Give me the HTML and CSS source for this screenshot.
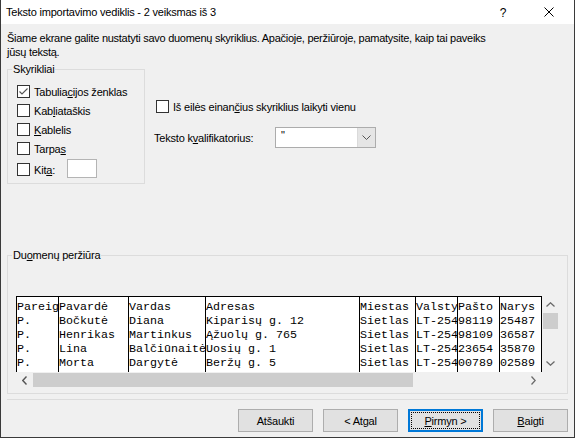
FILE: index.html
```html
<!DOCTYPE html>
<html lang="lt">
<head>
<meta charset="utf-8">
<title>Teksto importavimo vediklis</title>
<link rel="stylesheet" href="styles.css">
</head>
<body>
<div class="window">
  <div class="titlebar">
    <span class="title">Teksto importavimo vediklis - 2 veiksmas iš 3</span>
    <span class="tb-btn tb-help">?</span>
    <span class="tb-btn tb-close">
      <svg width="10" height="10" viewBox="0 0 10 10"><path d="M0.5 0.5 L9.5 9.5 M9.5 0.5 L0.5 9.5" stroke="#000" stroke-width="1" fill="none"/></svg>
    </span>
  </div>
  <div class="content">
    <p class="intro">Šiame ekrane galite nustatyti savo duomenų skyriklius. Apačioje, peržiūroje, pamatysite, kaip tai paveiks<br>jūsų tekstą.</p>
    <div class="top-row">
      <fieldset class="group group-sep">
        <legend>Skyrikliai</legend>
        <div class="group-body sep-body">
          <div class="cb-row">
            <span class="cb"><svg width="11" height="11" viewBox="0 0 11 11"><path d="M1.5 5.5 L4 8 L9.5 2.5" stroke="#555" stroke-width="1.1" fill="none"/></svg></span>
            <span>Tabulia<u>c</u>ijos ženklas</span>
          </div>
          <div class="cb-row"><span class="cb"></span><span>Kab<u>l</u>iataškis</span></div>
          <div class="cb-row"><span class="cb"></span><span><u>K</u>ablelis</span></div>
          <div class="cb-row"><span class="cb"></span><span>Tarpa<u>s</u></span></div>
          <div class="cb-row kita-row"><span class="cb"></span><span class="kita-label">Kit<u>a</u>:</span><span class="textbox"></span></div>
        </div>
      </fieldset>
      <div class="options">
        <div class="cb-row consec"><span class="cb"></span><span>Iš eilės einan<u>č</u>ius skyriklius laikyti vienu</span></div>
        <div class="qual-row">
          <span class="qual-label">Teksto k<u>v</u>alifikatorius:</span>
          <span class="combo">
            <span class="combo-value">"</span>
            <span class="combo-btn"><svg width="9" height="5" viewBox="0 0 9 5"><path d="M0.5 0.5 L4.5 4.5 L8.5 0.5" stroke="#555" stroke-width="1" fill="none"/></svg></span>
          </span>
        </div>
      </div>
    </div>
    <fieldset class="group group-preview">
      <legend>Du<u>o</u>menų peržiūra</legend>
      <div class="group-body preview-body">
        <div class="preview">
          <div class="table">
            <div class="col c6">Pareig
P.
P.
P.
P.</div>
            <div class="col c10">Pavardė
Bočkutė
Henrikas
Lina
Morta</div>
            <div class="col c11">Vardas
Diana
Martinkus
Balčiūnaitė
Dargytė</div>
            <div class="col c22">Adresas
Kiparisų g. 12
Ąžuolų g. 765
Uosių g. 1
Beržų g. 5</div>
            <div class="col c8">Miestas
Sietlas
Sietlas
Sietlas
Sietlas</div>
            <div class="col c6">Valsty
LT-254
LT-254
LT-254
LT-254</div>
            <div class="col c6">Pašto
98119
98109
23654
00789</div>
            <div class="col c6 last">Narys
25487
36587
35870
02589</div>
          </div>
          <div class="vscroll">
            <span class="sb-btn"><svg width="9" height="5" viewBox="0 0 9 5"><path d="M0.5 4.5 L4.5 0.8 L8.5 4.5" stroke="#6a6a6a" stroke-width="1.3" fill="none"/></svg></span>
            <span class="vthumb"></span>
            <span class="sb-fill"></span>
            <span class="sb-btn"><svg width="9" height="5" viewBox="0 0 9 5"><path d="M0.5 0.5 L4.5 4.2 L8.5 0.5" stroke="#6a6a6a" stroke-width="1.3" fill="none"/></svg></span>
          </div>
          <div class="hscroll">
            <span class="sb-btn"><svg width="5" height="9" viewBox="0 0 5 9"><path d="M4.5 0.5 L0.8 4.5 L4.5 8.5" stroke="#555" stroke-width="1.4" fill="none"/></svg></span>
            <span class="hthumb"></span>
            <span class="sb-fill"></span>
            <span class="sb-btn"><svg width="5" height="9" viewBox="0 0 5 9"><path d="M0.5 0.5 L4.2 4.5 L0.5 8.5" stroke="#6a6a6a" stroke-width="1.3" fill="none"/></svg></span>
          </div>
          <div class="corner"></div>
        </div>
      </div>
    </fieldset>
    <div class="separator"></div>
    <div class="buttons">
      <span class="btn">Atšaukti</span>
      <span class="btn">&lt; At<u>g</u>al</span>
      <span class="btn btn-default"><span class="focus"><u>P</u>irmyn &gt;</span></span>
      <span class="btn"><u>B</u>aigti</span>
    </div>
  </div>
</div>
</body>
</html>
```
FILE: styles.css
```css
html, body {
  margin: 0;
  padding: 0;
  background: #1c1c1c;
}

.window {
  width: 575px;
  height: 438px;
  box-sizing: border-box;
  background: #f0f0f0;
  border-left: 1px solid #3a3a3a;
  border-right: 1px solid #3a3a3a;
  border-bottom: 1px solid #3a3a3a;
  display: flex;
  flex-direction: column;
  font-family: "Liberation Sans", Arial, sans-serif;
  font-size: 11px;
  letter-spacing: -0.2px;
  color: #000;
  overflow: hidden;
}

u {
  text-decoration: underline;
  text-underline-offset: 1px;
}

/* title bar */
.titlebar {
  height: 24px;
  flex: none;
  background: #fff;
  display: flex;
  align-items: center;
  padding-left: 5px;
  padding-right: 2px;
}
.title {
  flex: 1;
  font-size: 11px;
}
.tb-btn {
  width: 46px;
  height: 24px;
  display: flex;
  align-items: center;
  justify-content: center;
}
.tb-help {
  font-size: 12px;
  padding-top: 1px;
  box-sizing: border-box;
}

/* content */
.content {
  flex: 1;
  display: flex;
  flex-direction: column;
  padding: 7px 6px 0 6px;
}
.intro {
  margin: 0;
  line-height: 14px;
  letter-spacing: -0.27px;
}

.top-row {
  display: flex;
  align-items: flex-start;
  margin-top: 3px;
}

.group {
  margin: 0;
  padding: 0;
  border: 1px solid #dcdcdc;
  min-width: 0;
}
.group legend {
  margin-left: 4px;
  padding: 0 1px;
  line-height: 14px;
}

.group-sep {
  width: 138px;
  box-sizing: border-box;
}
.sep-body {
  padding: 6px 0 3px 9px;
}

.cb-row {
  display: flex;
  align-items: center;
  height: 19px;
  white-space: nowrap;
}
.cb {
  width: 13px;
  height: 13px;
  box-sizing: border-box;
  border: 1px solid #333;
  background: #fff;
  margin-right: 4px;
  flex: none;
  display: flex;
  align-items: center;
  justify-content: center;
}
.kita-row {
  height: 21px;
  margin-top: 1px;
}
.kita-label {
  width: 33px;
}
.textbox {
  width: 30px;
  height: 19px;
  box-sizing: border-box;
  border: 1px solid #b4b4b4;
  background: #fff;
  margin-top: -2px;
}

.options {
  margin-left: 9px;
  padding-top: 35px;
}
.consec {
  margin-left: 2px;
}
.qual-row {
  display: flex;
  align-items: center;
  margin-top: 11px;
  height: 21px;
}
.qual-label {
  width: 121px;
}
.combo {
  width: 101px;
  height: 21px;
  box-sizing: border-box;
  border: 1px solid #acacac;
  background: #fff;
  display: flex;
}
.combo-value {
  flex: 1;
  padding-left: 5px;
  line-height: 14px;
}
.combo-btn {
  width: 17px;
  background: #e5e5e5;
  border-left: 1px solid #dadada;
  display: flex;
  align-items: center;
  justify-content: center;
}

/* preview */
.group-preview {
  width: 561px;
  box-sizing: border-box;
  margin-top: 64px;
}
.preview-body {
  padding: 34px 0 5px 8px;
}
.preview {
  display: grid;
  grid-template-columns: 526px 16px;
  grid-template-rows: 76px 16px;
}
.table {
  display: flex;
  background: #fff;
  border-top: 1px solid #000;
  overflow: hidden;
}
.col {
  box-sizing: border-box;
  border-left: 1px solid #000;
  padding-top: 3px;
  font-family: "Liberation Mono", "Courier New", monospace;
  font-size: 11.67px;
  letter-spacing: 0;
  line-height: 14px;
  white-space: pre;
  overflow: hidden;
  flex: none;
}
.col.last {
  border-right: 1px solid #000;
}
.c6 { width: 42px; }
.c8 { width: 56px; }
.c10 { width: 70px; }
.c11 { width: 77px; }
.c22 { width: 154px; }
.col.last.c6 { width: 43px; }

.vscroll {
  display: flex;
  flex-direction: column;
  background: #f0f0f0;
}
.vscroll .sb-btn {
  height: 17px;
  display: flex;
  align-items: center;
  justify-content: center;
}
.vthumb {
  height: 16px;
  margin-left: 1px;
  background: #cdcdcd;
}
.sb-fill {
  flex: 1;
}
.hscroll {
  display: flex;
  background: #f0f0f0;
}
.hscroll .sb-btn {
  width: 17px;
  display: flex;
  align-items: center;
  justify-content: center;
}
.hthumb {
  width: 380px;
  margin: 1px 0;
  background: #cdcdcd;
}
.corner {
  background: #f0f0f0;
}

.separator {
  margin-top: 5px;
  border-top: 1px solid #dcdcdc;
}

.buttons {
  display: flex;
  justify-content: flex-end;
  gap: 10px;
  margin-top: 9px;
}
.btn {
  width: 75px;
  height: 23px;
  box-sizing: border-box;
  border: 1px solid #adadad;
  background: #e1e1e1;
  display: flex;
  align-items: center;
  justify-content: center;
  white-space: nowrap;
}
.btn-default {
  border: 2px solid #0078d7;
  padding: 1px;
}
.focus {
  flex: 1;
  align-self: stretch;
  border: 1px dotted #000;
  display: flex;
  align-items: center;
  justify-content: center;
}
```
